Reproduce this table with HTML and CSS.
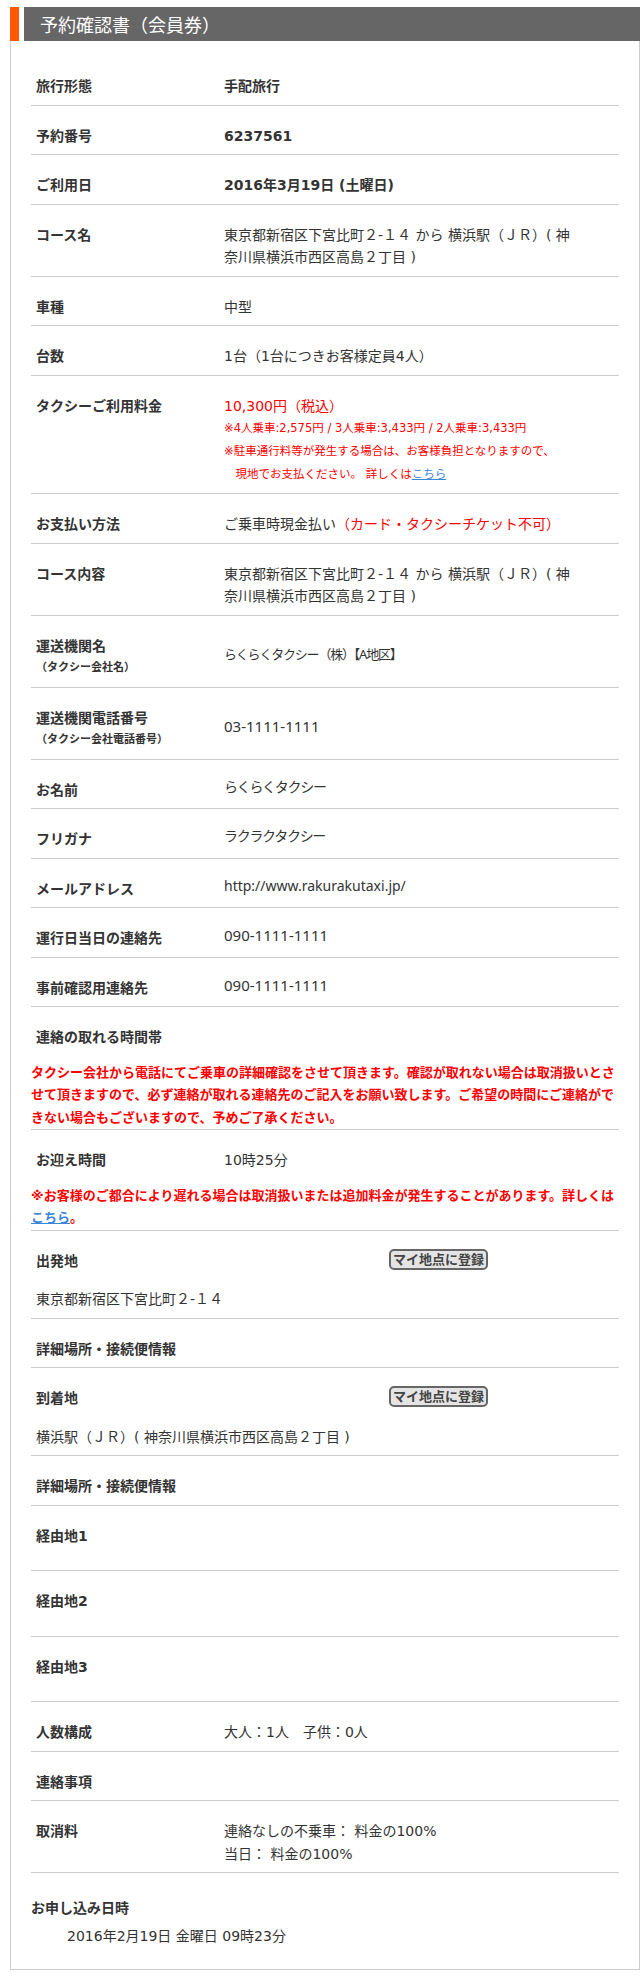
FILE: index.html
```html
<!DOCTYPE html>
<html lang="ja">
<head>
  <meta charset="UTF-8" />
  <meta name="viewport" content="width=device-width, initial-scale=1.0"/>
  <title>予約確認書（会員券）</title>
  <link rel="stylesheet" href="styles.css">
</head>
<body>
  <div class="page">
    <h1 class="title"><span>予約確認書（会員券）</span></h1>

    <div class="box">
      <div class="row">
        <div class="label">旅行形態</div>
        <div class="value bold">手配旅行</div>
      </div>
      <div class="row">
        <div class="label">予約番号</div>
        <div class="value bold">6237561</div>
      </div>
      <div class="row">
        <div class="label">ご利用日</div>
        <div class="value bold">2016年3月19日 (土曜日)</div>
      </div>
      <div class="row">
        <div class="label">コース名</div>
        <div class="value">東京都新宿区下宮比町２-１４ から 横浜駅（ＪＲ）( 神奈川県横浜市西区高島２丁目 )</div>
      </div>
      <div class="row">
        <div class="label">車種</div>
        <div class="value">中型</div>
      </div>
      <div class="row">
        <div class="label">台数</div>
        <div class="value">1台（1台につきお客様定員4人）</div>
      </div>
      <div class="row">
        <div class="label">タクシーご利用料金</div>
        <div class="value red">
          10,300円（税込）
          <div class="small">※4人乗車:2,575円 / 3人乗車:3,433円 / 2人乗車:3,433円</div>
          <div class="small">※駐車通行料等が発生する場合は、お客様負担となりますので、</div>
          <div class="small">　現地でお支払ください。 詳しくは<a href="#">こちら</a></div>
        </div>
      </div>
      <div class="row">
        <div class="label">お支払い方法</div>
        <div class="value">ご乗車時現金払い<span class="red">（カード・タクシーチケット不可）</span></div>
      </div>
      <div class="row">
        <div class="label">コース内容</div>
        <div class="value">東京都新宿区下宮比町２-１４ から 横浜駅（ＪＲ）( 神奈川県横浜市西区高島２丁目 )</div>
      </div>
      <div class="row">
        <div class="label">運送機関名<div class="sub">（タクシー会社名）</div></div>
        <div class="value alt mid company">らくらくタクシー（株）【A地区】</div>
      </div>
      <div class="row">
        <div class="label">運送機関電話番号<div class="sub">（タクシー会社電話番号）</div></div>
        <div class="value alt mid tel">03-1111-1111</div>
      </div>
      <div class="row">
        <div class="label">お名前</div>
        <div class="value alt kana">らくらくタクシー</div>
      </div>
      <div class="row">
        <div class="label">フリガナ</div>
        <div class="value alt kana">ラクラクタクシー</div>
      </div>
      <div class="row">
        <div class="label">メールアドレス</div>
        <div class="value alt">http://www.rakurakutaxi.jp/</div>
      </div>
      <div class="row">
        <div class="label">運行日当日の連絡先</div>
        <div class="value alt tel">090-1111-1111</div>
      </div>
      <div class="row">
        <div class="label">事前確認用連絡先</div>
        <div class="value alt tel">090-1111-1111</div>
      </div>
      <div class="row block">
        <div class="label">連絡の取れる時間帯</div>
        <p class="notice">タクシー会社から電話にてご乗車の詳細確認をさせて頂きます。確認が取れない場合は取消扱いとさせて頂きますので、必ず連絡が取れる連絡先のご記入をお願い致します。ご希望の時間にご連絡ができない場合もございますので、予めご了承ください。</p>
      </div>
      <div class="row block">
        <div class="label">お迎え時間</div>
        <div class="value">10時25分</div>
        <p class="notice">※お客様のご都合により遅れる場合は取消扱いまたは追加料金が発生することがあります。詳しくは<a href="#">こちら</a>。</p>
      </div>
      <div class="row place">
        <div class="label">出発地</div>
        <button class="mypoint" type="button">マイ地点に登録</button>
        <div class="address">東京都新宿区下宮比町２-１４</div>
      </div>
      <div class="row">
        <div class="label wide">詳細場所・接続便情報</div>
      </div>
      <div class="row place">
        <div class="label">到着地</div>
        <button class="mypoint" type="button">マイ地点に登録</button>
        <div class="address">横浜駅（ＪＲ）( 神奈川県横浜市西区高島２丁目 )</div>
      </div>
      <div class="row">
        <div class="label wide">詳細場所・接続便情報</div>
      </div>
      <div class="row via">
        <div class="label">経由地1</div>
      </div>
      <div class="row via">
        <div class="label">経由地2</div>
      </div>
      <div class="row via">
        <div class="label">経由地3</div>
      </div>
      <div class="row">
        <div class="label">人数構成</div>
        <div class="value">大人：1人　子供：0人</div>
      </div>
      <div class="row">
        <div class="label">連絡事項</div>
      </div>
      <div class="row">
        <div class="label">取消料</div>
        <div class="value">連絡なしの不乗車： 料金の100%<br>当日： 料金の100%</div>
      </div>

      <div class="applied">
        <div class="applied-label">お申し込み日時</div>
        <div class="applied-date">2016年2月19日 金曜日 09時23分</div>
      </div>
    </div>
  </div>
</body>
</html>
```

FILE: styles.css
```css
body {
  margin: 0;
  background: #fff;
  color: #333;
  font-family: "DejaVu Sans", "Noto Sans CJK JP", sans-serif;
  font-size: 14px;
  line-height: 22.5px;
}

.page {
  width: 630px;
  padding: 7px 0 0 10px;
}

.title {
  margin: 0;
  height: 34px;
  border-left: 9px solid #ff5a00;
  font-size: 18px;
  font-weight: normal;
}

.title span {
  display: block;
  height: 30px;
  margin-left: 5px;
  padding: 4px 0 0 16px;
  line-height: 30px;
  background: #666;
  color: #fff;
}

.box {
  border: 1px solid #ccc;
  border-top: none;
  padding: 15px 20px 0 20px;
}

.row {
  display: grid;
  grid-template-columns: 193px 352px 1fr;
  padding: 19px 0 7px;
  border-bottom: 1px solid #ccc;
}

.label {
  padding-left: 5px;
  font-weight: bold;
}

.label.wide {
  grid-column: 1 / -1;
}

.label .sub {
  font-size: 11px;
}

.value.bold {
  font-weight: bold;
}

.red {
  color: #f00;
}

.small {
  font-size: 11.5px;
  line-height: 23px;
}

a {
  color: #3b87d6;
  text-decoration: underline;
}

/* values written in the narrower alternate face */
.value.alt {
  font-family: "Noto Sans", "Noto Sans CJK JP", sans-serif;
  margin-top: -3px;
}

.value.kana {
  letter-spacing: -1.3px;
}

.value.tel {
  font-size: 15px;
}

.value.company {
  font-size: 13px;
  letter-spacing: -1.2px;
}

.value.mid {
  margin-top: 8px;
}

.row.block {
  padding-bottom: 0;
}

.notice {
  grid-column: 1 / -1;
  margin: 13px 0 0;
  color: #f00;
  font-size: 13px;
  font-weight: bold;
  line-height: 22.5px;
}

.row.place {
  grid-template-columns: 358px auto 1fr;
}

.mypoint {
  align-self: start;
  justify-self: start;
  margin-top: -1px;
  height: 21px;
  padding: 0 2px;
  border: 2px solid #666;
  border-radius: 5px;
  background: #e4e4e4;
  color: #444;
  font-family: "DejaVu Sans", "Noto Sans CJK JP", sans-serif;
  font-size: 13px;
  font-weight: bold;
  line-height: 17px;
}

.address {
  grid-column: 1 / -1;
  margin-top: 16px;
  padding-left: 5px;
}

.row.via {
  padding-bottom: 23px;
}

.applied {
  padding: 24px 0 22px;
}

.applied-label {
  font-weight: bold;
}

.applied-date {
  margin-top: 5px;
  padding-left: 36px;
}
```
